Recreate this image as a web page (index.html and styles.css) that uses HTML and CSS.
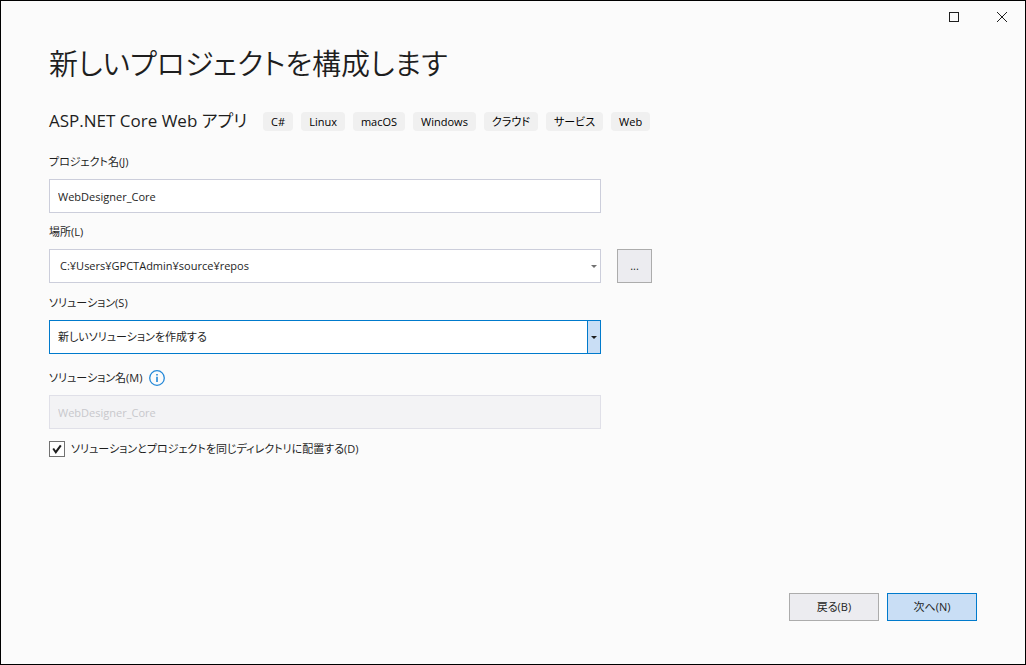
FILE: index.html
```html
<!DOCTYPE html>
<html lang="ja">
<head>
<meta charset="utf-8">
<meta name="viewport" content="width=device-width, initial-scale=1">
<title>新しいプロジェクトを構成します</title>
<link rel="stylesheet" href="styles.css">
</head>
<body>
<div class="window">
  <header class="titlebar">
    <button class="caption-button" type="button" aria-label="最大化">
      <svg width="12" height="12" viewBox="0 0 12 12"><rect x="1.500" y="1.500" width="9" height="9" fill="none" stroke="#1e1e1e"/></svg>
    </button>
    <button class="caption-button" type="button" aria-label="閉じる">
      <svg width="12" height="12" viewBox="0 0 12 12"><path d="M1 1l10 10M11 1L1 11" fill="none" stroke="#1e1e1e"/></svg>
    </button>
  </header>
  <main class="content">
    <h1 class="title">新しいプロジェクトを構成します</h1>
    <div class="template">
      <h2 class="template-name">ASP.NET Core Web アプリ</h2>
      <ul class="tags">
        <li class="tag">C#</li>
        <li class="tag">Linux</li>
        <li class="tag">macOS</li>
        <li class="tag">Windows</li>
        <li class="tag">クラウド</li>
        <li class="tag">サービス</li>
        <li class="tag">Web</li>
      </ul>
    </div>
    <form class="form" id="config">
      <div class="field">
        <label class="label" for="project">プロジェクト名(J)</label>
        <input class="box" id="project" type="text" value="WebDesigner_Core">
      </div>
      <div class="field">
        <label class="label" for="location">場所(L)</label>
        <div class="location-row">
          <div class="combo">
            <select class="box" id="location"><option>C:¥Users¥GPCTAdmin¥source¥repos</option></select>
            <span class="arrow"><svg width="6" height="3" viewBox="0 0 6 3"><path d="M0 0h6L3 3z" fill="currentColor"/></svg></span>
          </div>
          <button class="button browse" type="button" aria-label="参照">...</button>
        </div>
      </div>
      <div class="field field-solution">
        <label class="label" for="solution">ソリューション(S)</label>
        <div class="combo combo-active">
          <select class="box" id="solution"><option>新しいソリューションを作成する</option></select>
          <span class="arrow"><svg width="6" height="3" viewBox="0 0 6 3"><path d="M0 0h6L3 3z" fill="currentColor"/></svg></span>
        </div>
      </div>
      <div class="field">
        <div class="label-row">
          <label class="label" for="solution-name">ソリューション名(M)</label>
          <svg class="info" width="16" height="16" viewBox="0 0 16 16"><circle cx="8" cy="8" r="7.300" fill="none" stroke="#2488d8" stroke-width="1.300"/><path d="M7.200 4h1.600v1.600H7.200zM7.200 6.800h1.600V12H7.200z" fill="#2488d8"/></svg>
        </div>
        <input class="box" id="solution-name" type="text" value="WebDesigner_Core" disabled>
      </div>
      <label class="check">
        <span class="check-box">
          <input class="check-input" type="checkbox" checked>
          <svg class="check-mark" width="16" height="16" viewBox="0 0 16 16"><path d="M4.200 7.500L6.800 11.200 11.800 4.300" fill="none" stroke="#1e1e1e" stroke-width="2"/></svg>
        </span>
        <span>ソリューションとプロジェクトを同じディレクトリに配置する(D)</span>
      </label>
    </form>
  </main>
  <footer class="footer">
    <button class="button" type="button">戻る(B)</button>
    <button class="button primary" type="submit" form="config">次へ(N)</button>
  </footer>
</div>
</body>
</html>
```
FILE: styles.css
```css
* { box-sizing: border-box; }

body {
  margin: 0;
  color: #1e1e1e;
  font: 11px/16px "Open Sans", "Noto Sans CJK JP", sans-serif;
  font-feature-settings: "palt";
}

input, select, button {
  font: inherit;
  font-feature-settings: inherit;
  color: inherit;
}

.window {
  display: flex;
  flex-direction: column;
  min-height: 100vh;
  border: 1px solid #000;
  background: #fbfbfb;
}

.titlebar {
  display: flex;
  justify-content: flex-end;
  gap: 2px;
  height: 32px;
}

.caption-button {
  display: flex;
  align-items: center;
  justify-content: center;
  width: 46px;
  padding: 0;
  border: 0;
  background: none;
}

.content {
  flex: 1;
  padding: 7px 48px 0;
}

.title {
  margin: 0;
  font-size: 29px;
  line-height: 48px;
  font-weight: 350;
}

.template {
  display: flex;
  align-items: center;
  gap: 16px;
  height: 24px;
  margin: 21px 0;
}

.template-name {
  margin: 0;
  font-size: 17px;
  line-height: 24px;
  font-weight: 400;
}

.tags {
  display: flex;
  gap: 8px;
  margin: 0;
  padding: 0;
  list-style: none;
}

.tag {
  padding: 2px 8px;
  border-radius: 4px;
  background: #f0f0f0;
  color: #000;
  line-height: 15px;
}

.form {
  max-width: 552px;
}

.field {
  display: flex;
  flex-direction: column;
  gap: 9px;
  margin-bottom: 11px;
}

.field-solution {
  margin-top: 12px;
  margin-bottom: 16px;
}

.label-row {
  display: flex;
  align-items: center;
  gap: 6px;
}

.box {
  width: 100%;
  height: 34px;
  padding: 0 8px;
  border: 1px solid #cccedb;
  border-radius: 0;
  background: #fff;
  appearance: none;
}

.box:disabled {
  border-color: #e0e0e8;
  background: #f3f3f5;
  color: #c8c8cc;
  opacity: 1;
}

.location-row {
  display: grid;
  grid-template-columns: 100% 35px;
  gap: 16px;
}

.combo {
  position: relative;
}

.combo .box {
  padding: 0 20px 0 10px;
}

.arrow {
  position: absolute;
  inset: 0 0 0 auto;
  display: flex;
  align-items: center;
  justify-content: center;
  width: 14px;
  color: #717171;
  pointer-events: none;
}

.combo-active .box {
  padding-left: 8px;
  border-color: #007acc;
}

.combo-active .arrow {
  border: 1px solid #007acc;
  background: #c9def5;
  color: #1e1e1e;
}

.button {
  width: 90px;
  height: 28px;
  padding: 0;
  border: 1px solid #acacac;
  background: #ececf0;
}

.browse {
  width: 35px;
  height: 34px;
}

.primary {
  border-color: #007acc;
  background: #c9def5;
}

.check {
  display: flex;
  align-items: center;
  gap: 6px;
  margin-top: 12px;
}

.check-box {
  position: relative;
  display: flex;
}

.check-input {
  width: 16px;
  height: 16px;
  margin: 0;
  border: 1px solid #717171;
  background: #fefefe;
  appearance: none;
}

.check-mark {
  position: absolute;
  inset: 0;
  visibility: hidden;
  pointer-events: none;
}

.check-input:checked + .check-mark {
  visibility: visible;
}

.footer {
  display: flex;
  justify-content: flex-end;
  gap: 8px;
  padding: 0 48px 43px;
}
```
